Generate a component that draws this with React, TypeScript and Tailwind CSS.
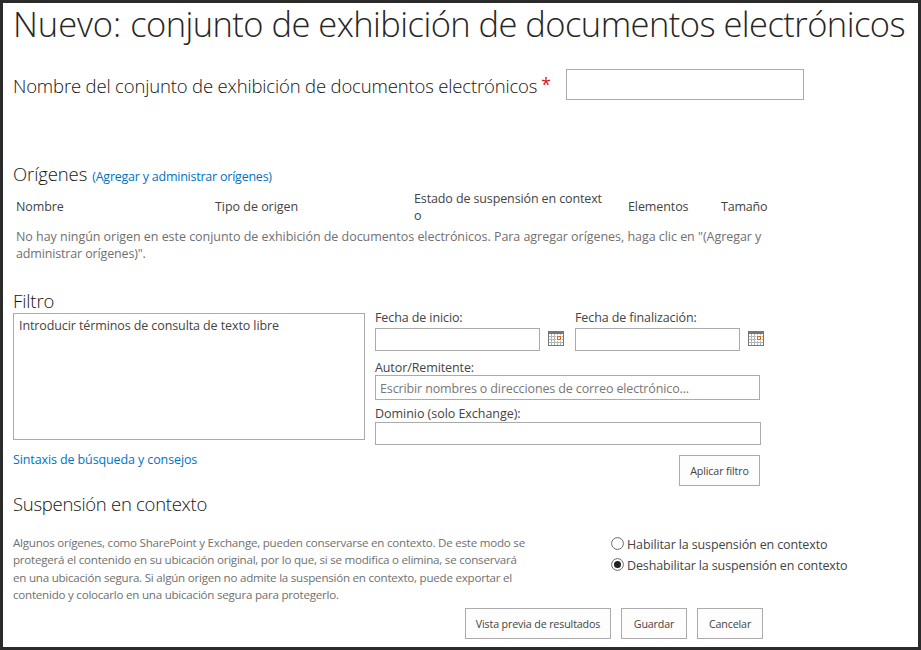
import type { ReactNode } from "react";

const field = "border border-[#ababab] bg-white outline-none";

function Heading({ children, className = "" }: { children: ReactNode; className?: string }) {
  return (
    <h2 className={`text-[18.5px] font-light leading-6 text-[#141414] ${className}`}>{children}</h2>
  );
}

function Button({ children, className }: { children: ReactNode; className: string }) {
  return (
    <button
      type="button"
      className={`h-[31px] shrink-0 whitespace-nowrap border border-[#ababab] bg-[#fdfdfd] pt-px text-[10.7px] tracking-[-0.14px] text-[#444] ${className}`}
    >
      {children}
    </button>
  );
}

function CalendarIcon() {
  return (
    <svg width="16" height="15" viewBox="0 0 16 15" shapeRendering="crispEdges" className="block shrink-0">
      <rect width="16" height="15" fill="#777" />
      <rect x="1" y="3" width="14" height="11" fill="#fff" />
      <path
        d="M1 5h14v1H1zM1 8h14v1H1zM1 11h14v1H1zM3 3h1v11H3zM6 3h1v11H6zM9 3h1v11H9zM12 3h1v11h-1z"
        fill="#b4b4b4"
      />
      <rect x="8" y="4" width="6" height="6" fill="#fff" />
      <path d="M9 5h4v4H9zM10 6v2h2V6z" fill="#e0690a" fillRule="evenodd" />
    </svg>
  );
}

function DateField({ label }: { label: string }) {
  return (
    <label className="block w-[200px]">
      <span className="block h-[19px]">{label}</span>
      <span className="flex items-start">
        <input className={`h-[23px] w-[165px] ${field}`} />
        <span className="ml-2 mt-[3px]">
          <CalendarIcon />
        </span>
      </span>
    </label>
  );
}

function Radio({ checked = false, children }: { checked?: boolean; children: ReactNode }) {
  return (
    <label className="flex h-[21px] items-center gap-[3px]">
      <svg width="13" height="13" viewBox="0 0 13 13" className="-mt-[2px] shrink-0">
        <circle cx="6.5" cy="6.5" r="5.9" fill="#fff" stroke="#6a6a6a" />
        {checked && <circle cx="6.5" cy="6.5" r="3.5" fill="#222" />}
      </svg>
      <span className="whitespace-nowrap tracking-[-0.13px]">{children}</span>
    </label>
  );
}

export default function App() {
  return (
    <main className="h-[650px] w-[921px] overflow-hidden border-[3px] border-[#2b2b2b] bg-white pl-[10px] font-['Open_Sans','Noto_Sans',sans-serif] text-[12.5px] leading-[17px] tracking-[-0.1px] text-[#444]">
      <h1 className="h-[66px] whitespace-nowrap text-[34.5px] font-light leading-[42px] tracking-[-0.55px] text-[#262626]">
        <span className="tracking-[-0.05px]">Nuevo: </span>
        conjunto de exhibición de documentos electrónicos
      </h1>

      <div className="flex h-[31px] items-center">
        <div className="flex w-[553px] pt-[2px]">
          <Heading className="whitespace-nowrap tracking-[-0.16px]">
            Nombre del conjunto de exhibición de documentos electrónicos
          </Heading>
          <span className="ml-1 -mt-[2px] text-[17.5px] leading-6 text-[#d8161b]">*</span>
        </div>
        <input className={`h-[31px] w-[238px] ${field}`} />
      </div>

      <section className="mt-[62px] h-[128px]">
        <div className="flex items-baseline gap-[5px]">
          <Heading>Orígenes</Heading>
          <a href="#" className="tracking-[-0.23px] text-[#0072c6]">
            (Agregar y administrar orígenes)
          </a>
        </div>
        <div className="mt-1 flex h-[34px] pl-[3px]">
          <div className="w-[199px] pt-2">Nombre</div>
          <div className="w-[199px] pt-2 tracking-[-0.03px]">Tipo de origen</div>
          <div className="w-[214px] tracking-[-0.12px]">
            Estado de suspensión en context
            <br />o
          </div>
          <div className="w-[93px] pt-2">Elementos</div>
          <div className="pt-2 tracking-[-0.2px]">Tamaño</div>
        </div>
        <p className="mt-1 w-[760px] pl-[3px] tracking-[-0.04px] text-[#707070]">
          No hay ningún origen en este conjunto de exhibición de documentos electrónicos. Para agregar orígenes, haga clic en "(Agregar y
          <br />
          <span className="tracking-[-0.15px]">administrar orígenes)".</span>
        </p>
      </section>

      <section className="flex h-[202px]">
        <div className="w-[362px]">
          <Heading className="h-[23px] leading-[22px]!">Filtro</Heading>
          <textarea
            className={`block h-[127px] w-[352px] resize-none px-[5px] py-[3px] ${field}`}
            defaultValue="Introducir términos de consulta de texto libre"
          />
          <a href="#" className="mt-[11px] block tracking-[-0.11px] text-[#0072c6]">
            Sintaxis de búsqueda y consejos
          </a>
        </div>
        <div className="w-[400px] pt-[19px]">
          <div className="flex h-[50px]">
            <DateField label="Fecha de inicio:" />
            <DateField label="Fecha de finalización:" />
          </div>
          <label className="block h-[46px]">
            <span className="block h-4">Autor/Remitente:</span>
            <input
              placeholder="Escribir nombres o direcciones de correo electrónico..."
              className={`h-[25px] w-[385px] px-1 pt-[2px] tracking-[-0.13px] placeholder:text-[#777] placeholder:opacity-100 ${field}`}
            />
          </label>
          <label className="block">
            <span className="block h-[17px] tracking-[-0.04px]">Dominio (solo Exchange):</span>
            <input className={`block h-[23px] w-[386px] ${field}`} />
          </label>
          <div className="mt-[10px] flex w-[385px] justify-end">
            <Button className="w-[81px]">Aplicar filtro</Button>
          </div>
        </div>
      </section>

      <section>
        <Heading className="tracking-[-0.28px]">Suspensión en contexto</Heading>
        <div className="mt-[18px] flex h-[74px]">
          <p className="w-[598px] whitespace-nowrap text-[11.6px] leading-[17.33px] tracking-[-0.24px] text-[#707070]">
            Algunos orígenes, como SharePoint y Exchange, pueden conservarse en contexto. De este modo se
            <br />
            protegerá el contenido en su ubicación original, por lo que, si se modifica o elimina, se conservará
            <br />
            en una ubicación segura. Si algún origen no admite la suspensión en contexto, puede exportar el
            <br />
            contenido y colocarlo en una ubicación segura para protegerlo.
          </p>
          <div>
            <Radio>Habilitar la suspensión en contexto</Radio>
            <Radio checked>Deshabilitar la suspensión en contexto</Radio>
          </div>
        </div>
        <div className="ml-[452px] flex gap-[10px]">
          <Button className="w-[146px]">Vista previa de resultados</Button>
          <Button className="w-[66px]">Guardar</Button>
          <Button className="w-[66px]">Cancelar</Button>
        </div>
      </section>
    </main>
  );
}
